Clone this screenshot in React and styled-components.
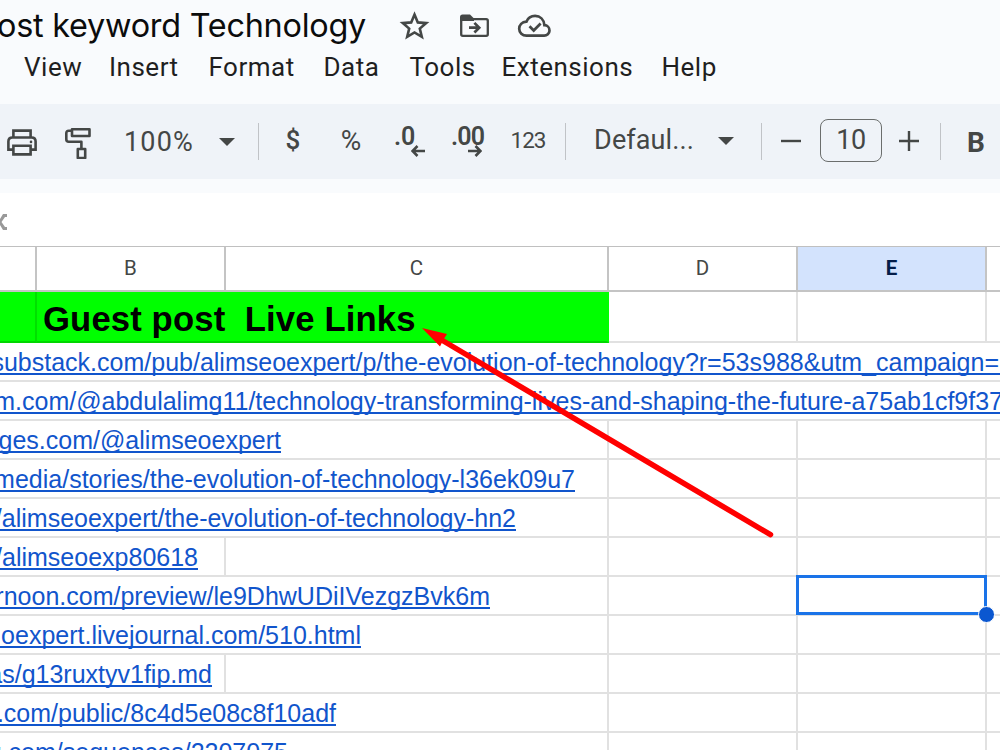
import React from 'react'
import styled, { createGlobalStyle } from 'styled-components'

const GlobalStyle = createGlobalStyle`
  * { box-sizing: border-box; }
  body {
    margin: 0;
    overflow: hidden;
    background: #fff;
  }
`

const Page = styled.div`
  position: relative;
  width: 1000px;
  height: 750px;
  overflow: hidden;
  background: #fff;
`

const Header = styled.header`
  height: 104px;
  background: #f9fbfd;
`

const TitleRow = styled.div`
  display: flex;
  align-items: center;
  height: 52px;
`

const Title = styled.div`
  display: flex;
  justify-content: flex-end;
  width: 366px;
  margin-right: 30px;
  font: 400 32.4px/52px Inter, sans-serif;
  letter-spacing: -0.25px;
  white-space: nowrap;
  color: #0b0c0c;
`

const TitleIcons = styled.div`
  display: flex;
  align-items: center;
  gap: 24px;
  color: #444746;
`

const Menu = styled.nav`
  display: flex;
  padding-left: 24px;
  height: 30px;
`

const MenuItem = styled.span`
  width: ${({ $w }) => $w}px;
  font: 400 26px/30px Roboto, sans-serif;
  letter-spacing: 0.5px;
  color: #1f1f1f;
`

const Toolbar = styled.div`
  display: grid;
  grid-template-columns: 44px 68px 94px 43px 19px 50px 66px 52px 62px 60px 15px 142px 38px 16px 45px 74px 42px 21px 50px;
  align-items: center;
  height: 75px;
  background: #eff3f8;
  color: #444746;
`

const Tool = styled.div`
  display: flex;
  justify-content: center;
  align-items: center;
  height: 75px;
  padding-right: ${({ $back }) => $back || 0}px;
  padding-bottom: ${({ $lift }) => $lift || 0}px;
`

const Label = styled(Tool)`
  font: ${({ $weight }) => $weight || 400} ${({ $size }) => $size}px/1 Roboto, sans-serif;
  letter-spacing: ${({ $ls }) => $ls || 0}px;
  padding-top: ${({ $drop }) => $drop || 0}px;
`

const Divider = styled.div`
  justify-self: center;
  width: 1px;
  height: 37px;
  background: #c0c3c7;
`

const SizeBox = styled.div`
  display: flex;
  align-items: center;
  justify-content: center;
  width: 62px;
  height: 43px;
  border: 1px solid #6b6e6d;
  border-radius: 8px;
  font: 400 27px/1 Roboto, sans-serif;
  letter-spacing: -0.5px;
`

const Decimal = styled.div`
  display: flex;
  flex-direction: column;
  width: 32px;
  height: 34px;
  font: 600 25px/25px Roboto, sans-serif;
  letter-spacing: ${({ $ls }) => $ls || 0}px;

  svg {
    align-self: flex-end;
    margin-top: -4px;
    margin-right: 1px;
  }
`

const Strip = styled.div`
  height: 14px;
  background: #f9fbfd;
`

const FormulaBar = styled.div`
  display: flex;
  align-items: center;
  height: 53px;
  padding-top: 5px;
`

const Sheet = styled.div`
  border-top: 1px solid #c0c0c0;
`

const Row = styled.div`
  display: grid;
  grid-template-columns: 37px 189px 383px 189px 189px 40px;
  height: ${({ $h }) => $h || 39}px;
`

const HeadCell = styled.div`
  display: flex;
  align-items: center;
  justify-content: center;
  border-right: 2px solid #c4c4c4;
  border-bottom: 2px solid #c4c4c4;
  background: ${({ $active }) => ($active ? '#d3e3fd' : '#fff')};
  color: ${({ $active }) => ($active ? '#041e49' : '#444746')};
  font: ${({ $active }) => ($active ? 700 : 400)} 20.5px/1 Roboto, sans-serif;
`

const Cell = styled.div`
  position: relative;
  grid-column: span ${({ $span }) => $span || 1};
  min-width: 0;
  border-right: 2px solid #e1e1e1;
  border-bottom: 2px solid #e1e1e1;
`

const GreenCell = styled(Cell)`
  background: #00ff00;
  border-right-color: ${({ $last }) => ($last ? '#00ff00' : '#00e000')};
  border-bottom-color: #00d800;
`

const Heading = styled.div`
  height: 49px;
  padding-left: 6px;
  font: 700 34.67px/55px "Liberation Sans", Arial, sans-serif;
  letter-spacing: 0.13px;
  white-space: pre;
  color: #000;
`

// the text runs out past the left edge of the page
const Link = styled.div`
  display: flex;
  justify-content: flex-end;
  width: ${({ $end }) => $end}px;
  height: 32px;
  padding-right: ${({ $pad }) => $pad || 0}px;
  border-bottom: 2px solid #1155cc;
  font: 400 25px/39px "Liberation Sans", Arial, sans-serif;
  white-space: nowrap;
  color: #1155cc;
`

const Selection = styled.div`
  position: absolute;
  z-index: 1;
  top: -2px;
  left: -2px;
  width: 191px;
  height: 40px;
  border: 3px solid #1a73e8;
`

const Handle = styled.div`
  position: absolute;
  right: -11px;
  bottom: -11px;
  width: 17px;
  height: 17px;
  border: 1px solid #fff;
  border-radius: 50%;
  background: #0b57d0;
`

const Pointer = styled.svg`
  position: absolute;
  z-index: 2;
  top: 0;
  left: 0;
`

const links = [
  { text: 'substack.com/pub/alimseoexpert/p/the-evolution-of-technology?r=53s988&utm_campaign=', end: 1000, pad: 1, span: 6 },
  { text: 'm.com/@abdulalimg11/technology-transforming-lives-and-shaping-the-future-a75ab1cf9f37', end: 1003, span: 6 },
  { text: 'ges.com/@alimseoexpert', end: 281, span: 3 },
  { text: 'media/stories/the-evolution-of-technology-l36ek09u7', end: 575, span: 3 },
  { text: '/alimseoexpert/the-evolution-of-technology-hn2', end: 516, span: 3 },
  { text: '/alimseoexp80618', end: 198, span: 2 },
  { text: 'rnoon.com/preview/le9DhwUDiIVezgzBvk6m', end: 490, span: 3, selected: true },
  { text: 'oexpert.livejournal.com/510.html', end: 361, span: 3 },
  { text: 'as/g13ruxtyv1fip.md', end: 212, span: 2 },
  { text: '.com/public/8c4d5e08c8f10adf', end: 336, span: 3 },
  { text: 'g.com/sequences/2207075', end: 288, span: 3 },
]

const menu = [
  ['View', 85],
  ['Insert', 99.5],
  ['Format', 115],
  ['Data', 86],
  ['Tools', 92],
  ['Extensions', 160],
  ['Help', 80],
]

const Caret = () => (
  <svg width="16" height="8" viewBox="0 0 16 8"><path d="M0 0h16L8 8z" fill="currentColor" /></svg>
)

const StarIcon = () => (
  <svg width="36" height="36" viewBox="0 0 36 36" fill="none" stroke="currentColor" strokeWidth="2.6">
    <path d="M18.500 6.600l3.300 7.800 8.400.7-6.400 5.500 2 8.200-7.300-4.400-7.300 4.400 2-8.200-6.400-5.500 8.400-.7z" />
  </svg>
)

const MoveIcon = () => (
  <svg width="36" height="36" viewBox="0 0 36 36" fill="none" stroke="currentColor" strokeWidth="2.3">
    <path d="M5.200 11.100h25q1.600 0 1.600 1.600v13.600q0 1.600-1.600 1.600H6.800q-1.600 0-1.600-1.600z" />
    <path d="M4 13V9q0-2.500 2.500-2.500h7.500l4 4V13z" fill="currentColor" stroke="none" />
    <path d="M13 19.700h9M18.400 14.900l4.800 4.800-4.800 4.800" strokeWidth="2.700" />
  </svg>
)

const CloudIcon = () => (
  <svg width="36" height="36" viewBox="0 0 36 36" fill="none" stroke="currentColor" strokeWidth="2.7">
    <path d="M10.500 27.700h17.500a5.300 5.300 0 0 0 .4-10.600C27.900 11.400 24.100 7.900 19.100 7.900c-4.100 0-7.200 2.200-8.700 5.800C6 14.100 3.200 17.100 3.200 20.800c0 3.900 3.200 6.900 7.300 6.900z" />
    <path d="M13.500 18.300l4.200 4.200 6.900-7" />
  </svg>
)

const PrintIcon = () => (
  <svg width="32" height="30" viewBox="0 0 32 30" fill="none" stroke="currentColor" strokeWidth="2.6">
    <path d="M7.400 10V3.600h17.200V10" />
    <path d="M7.400 22.600h-5V14.500q0-4 4-4h19.200q4 0 4 4v8.100h-5" />
    <path d="M7.400 18.800h17.200v8.600H7.400z" />
    <circle cx="25" cy="14.900" r="1.300" fill="currentColor" stroke="none" />
  </svg>
)

const PaintIcon = () => (
  <svg width="28" height="34" viewBox="0 0 28 34" fill="none" stroke="currentColor" strokeWidth="2.6" strokeLinejoin="round">
    <path d="M8 4.200h17.500v6.800H8z" />
    <path d="M8 5.700H4.800q-2.500 0-2.500 2.500v6q0 2.500 2.500 2.500h12.600v7.300" />
    <path d="M13.800 24h7.400v9h-7.400z" />
  </svg>
)

const DecimalArrow = ({ right }) => (
  <svg width="14" height="12" viewBox="0 0 14 12" fill="none" stroke="currentColor" strokeWidth="2.6">
    <path d={right ? 'M0 6h12.500M7.500 1l5 5-5 5' : 'M14 6H1.500M6.500 1l-5 5 5 5'} />
  </svg>
)

export default function App() {
  return (
    <Page>
      <GlobalStyle />
      <Header>
        <TitleRow>
          <Title>ost keyword Technology</Title>
          <TitleIcons>
            <StarIcon />
            <MoveIcon />
            <CloudIcon />
          </TitleIcons>
        </TitleRow>
        <Menu>
          {menu.map(([name, w]) => <MenuItem key={name} $w={w}>{name}</MenuItem>)}
        </Menu>
      </Header>

      <Toolbar>
        <Tool><PrintIcon /></Tool>
        <Tool><PaintIcon /></Tool>
        <Label $size={27} $drop={2} $ls={1.2}>100%</Label>
        <Tool $back={1}><Caret /></Tool>
        <Divider />
        <Label $size={26} $weight={500} $lift={3}>$</Label>
        <Label $size={28} $lift={2}>%</Label>
        <Tool $lift={2}>
          <Decimal>
            .0
            <DecimalArrow />
          </Decimal>
        </Tool>
        <Tool $lift={2}>
          <Decimal $ls={-0.8}>
            .00
            <DecimalArrow right />
          </Decimal>
        </Tool>
        <Label $size={22.5} $ls={-1} $lift={2}>123</Label>
        <Divider />
        <Label $size={27} $lift={2} $ls={0.1}>Defaul...</Label>
        <Tool $back={17} $lift={2}><Caret /></Tool>
        <Divider />
        <Tool $lift={2} $back={1}><svg width="20" height="20"><path d="M0 10h20" stroke="currentColor" strokeWidth="2.400" /></svg></Tool>
        <Tool $lift={2}><SizeBox>10</SizeBox></Tool>
        <Tool $lift={2}><svg width="20" height="20"><path d="M0 10h20M10 0v20" stroke="currentColor" strokeWidth="2.400" /></svg></Tool>
        <Divider />
        <Label $size={28} $weight={700} $drop={3}>B</Label>
      </Toolbar>
      <Strip />
      <FormulaBar>
        <svg width="8" height="16" viewBox="0 0 8 16" fill="#999">
          <path d="M0 5l3-5h4v3H5L1.500 8 5 13h2v3H3l-3-5z" />
        </svg>
      </FormulaBar>

      <Sheet>
        <Row $h={45}>
          <HeadCell />
          <HeadCell>B</HeadCell>
          <HeadCell>C</HeadCell>
          <HeadCell>D</HeadCell>
          <HeadCell $active>E</HeadCell>
          <HeadCell />
        </Row>
        <Row $h={51}>
          <GreenCell />
          <GreenCell $span={2} $last>
            <Heading>Guest post  Live Links</Heading>
          </GreenCell>
          <Cell />
          <Cell />
          <Cell />
        </Row>
        {links.map(({ text, end, pad, span, selected }) => (
          <Row key={text}>
            <Cell $span={span}><Link $end={end} $pad={pad}>{text}</Link></Cell>
            {span < 3 && <Cell />}
            {span < 6 && (
              <>
                <Cell />
                <Cell>{selected && <Selection><Handle /></Selection>}</Cell>
                <Cell />
              </>
            )}
          </Row>
        ))}
      </Sheet>

      <Pointer width="1000" height="750" fill="#ff0000">
        <path d="M422 328l25 6-3.500 5.500L440 346.500z" />
        <path d="M440 339L770.500 534.700" stroke="#ff0000" strokeWidth="5.500" strokeLinecap="round" />
      </Pointer>
    </Page>
  )
}
